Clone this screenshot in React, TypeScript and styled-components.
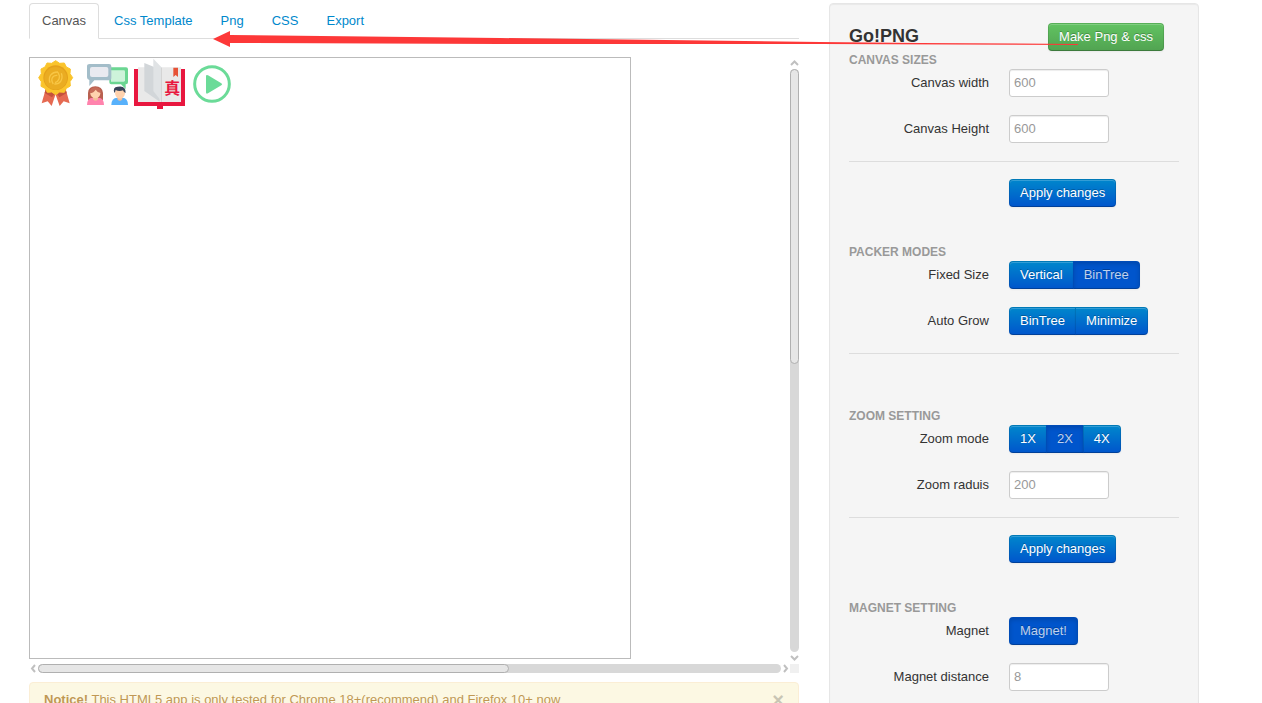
import React from "react";
import styled, { createGlobalStyle, css } from "styled-components";

const GlobalStyle = createGlobalStyle`
  * { box-sizing: border-box; }
  body {
    margin: 0;
    background: #fff;
    color: #333;
    font-family: "Liberation Sans", Arial, "Noto Sans CJK SC", sans-serif;
    font-size: 13px;
    line-height: 18px;
  }
`;

const Page = styled.div`
  position: relative;
  display: grid;
  grid-template-columns: minmax(0, 77fr) minmax(0, 37fr);
  gap: 30px;
  align-items: start;
  height: 100vh;
  padding: 3px 63px 0 29px;
  overflow: hidden;
`;

const Main = styled.main`
  display: flex;
  flex-direction: column;
`;

const Tabs = styled.nav`
  display: flex;
  gap: 2px;
  height: 36px;
  margin-bottom: 18px;
  border-bottom: 1px solid #ddd;
`;

const Tab = styled.a<{ $active?: boolean }>`
  height: 36px;
  padding: 8px 12px;
  border: 1px solid transparent;
  border-radius: 4px 4px 0 0;
  color: #08c;
  text-decoration: none;
  ${(p) =>
    p.$active &&
    css`
      background: #fff;
      border-color: #ddd #ddd #fff;
      color: #555;
    `}
`;

const Scroller = styled.section`
  display: grid;
  grid-template-columns: minmax(0, 1fr) 9px;
  grid-template-rows: auto 9px;
  margin-bottom: 9px;
`;

const Viewport = styled.div`
  padding-bottom: 5px;
  overflow: hidden;
`;

const Stage = styled.div`
  position: relative;
  width: 602px;
  height: 602px;
  border: 1px solid #bbb;
`;

const Sprite = styled.svg<{ $x: number; $y: number }>`
  position: absolute;
  left: ${(p) => p.$x}px;
  top: ${(p) => p.$y}px;
`;

const Bar = styled.div<{ $vertical?: boolean }>`
  display: flex;
  flex-direction: ${(p) => (p.$vertical ? "column" : "row")};
`;

const BarArrow = styled.svg<{ $vertical?: boolean }>`
  flex: none;
  width: 9px;
  height: ${(p) => (p.$vertical ? 12 : 9)}px;
  fill: none;
  stroke: #c0c0c0;
  stroke-width: 2;
`;

const Track = styled.div`
  display: flex;
  flex-direction: inherit;
  flex: 1;
  border-radius: 5px;
  background: #d8d8d8;
`;

const Thumb = styled.div<{ $share: number }>`
  flex: 0 0 ${(p) => p.$share * 100}%;
  border: 1px solid #b0b0b0;
  border-radius: 5px;
  background: #e6e6e6;
`;

const Corner = styled.div`
  background: #f0f0f0;
`;

const Alert = styled.div`
  display: flex;
  justify-content: space-between;
  padding: 8px 14px;
  border: 1px solid #fbeed5;
  border-radius: 4px;
  background: #fcf8e3;
  color: #c09853;
  text-shadow: 0 1px 0 rgba(255, 255, 255, 0.5);
`;

const CloseButton = styled.button`
  height: 18px;
  padding: 0;
  border: 0;
  background: none;
  color: #000;
  opacity: 0.2;
  font: bold 20px/16px "Liberation Sans", Arial, sans-serif;
`;

const Panel = styled.aside`
  padding: 19px;
  border: 1px solid #e6e6e6;
  border-radius: 4px;
  background: #f5f5f5;
  box-shadow: inset 0 1px 1px rgba(0, 0, 0, 0.05);
`;

const PanelHeader = styled.header`
  display: flex;
  justify-content: space-between;
  padding-right: 15px;
`;

const Title = styled.h1`
  margin: 0;
  font-size: 18px;
  line-height: 27px;
`;

const Group = styled.section`
  display: flex;
  flex-direction: column;
  gap: 18px;
  margin-bottom: 36px;
`;

const GroupTitle = styled.h2`
  margin: 0 0 -18px;
  color: #999;
  font-size: 12px;
  line-height: 18px;
  text-transform: uppercase;
`;

const Row = styled.div`
  display: grid;
  grid-template-columns: 140px minmax(0, 1fr);
  column-gap: 20px;
`;

const Label = styled.label`
  padding-top: 5px;
  text-align: right;
`;

const Field = styled.input`
  width: 100px;
  height: 28px;
  padding: 3px 4px 5px;
  border: 1px solid #ccc;
  border-radius: 3px;
  background: #fff;
  box-shadow: inset 0 1px 1px rgba(0, 0, 0, 0.075);
  color: #555;
  font: inherit;
  &::placeholder { color: #999; }
`;

const Rule = styled.hr`
  width: 100%;
  height: 1px;
  margin: 0 0 -1px;
  border: 0;
  background: #ddd;
`;

const Button = styled.button<{ $tone?: "success"; $active?: boolean }>`
  height: 28px;
  padding: 4px 10px;
  border: 1px solid;
  border-color: rgba(0, 0, 0, 0.1) rgba(0, 0, 0, 0.1) rgba(0, 0, 0, 0.25);
  border-radius: 4px;
  background: ${(p) =>
      p.$tone === "success"
        ? "linear-gradient(#62c462, #51a351)"
        : "linear-gradient(#08c, #05c)"}
    border-box;
  box-shadow: inset 0 1px 0 rgba(255, 255, 255, 0.2), 0 1px 2px rgba(0, 0, 0, 0.05);
  color: #fff;
  font: inherit;
  text-shadow: 0 -1px 0 rgba(0, 0, 0, 0.25);
  white-space: nowrap;
  ${(p) =>
    p.$active &&
    css`
      background: #05c border-box;
      box-shadow: inset 0 2px 4px rgba(0, 0, 0, 0.15), 0 1px 2px rgba(0, 0, 0, 0.05);
      color: rgba(255, 255, 255, 0.75);
    `}
`;

const ButtonGroup = styled.div`
  display: flex;
  & > button { border-radius: 0; }
  & > button + button { margin-left: -1px; }
  & > button:first-child { border-radius: 4px 0 0 4px; }
  & > button:last-child { border-radius: 0 4px 4px 0; }
  & > button:only-child { border-radius: 4px; }
`;

const Pointer = styled.svg`
  position: absolute;
  left: 213px;
  top: 30px;
  pointer-events: none;
`;

const medalRim = Array.from({ length: 24 }, (_, i) => {
  const angle = (i * Math.PI) / 12;
  const radius = i % 2 ? 45 : 51;
  return `${Math.round(53 + radius * Math.sin(angle))},${Math.round(53 - radius * Math.cos(angle))}`;
}).join(" ");

function Medal() {
  return (
    <Sprite $x={8} $y={2} width="36" height="48" viewBox="0 0 108 144" aria-label="Medal">
      <path d="M24 84 11 130 29 124 41 138 55 96z" fill="#e56a52" />
      <path d="M82 84 95 130 77 124 65 138 50 96z" fill="#e56a52" />
      <path d="M24 84 20 99 42 112 54 96 64 112 86 99 82 84z" fill="#c4523c" />
      <polygon points={medalRim} fill="#fac42c" stroke="#fac42c" strokeWidth="3" strokeLinejoin="round" />
      <circle cx="53" cy="53" r="37" fill="#e5a11b" />
      <circle cx="53" cy="55" r="34" fill="#eaac22" />
      <path
        d="M36 68C29 50 42 35 60 36M46 72C36 58 44 45 58 46M70 40c7 18-4 33-21 32M60 37c9 14 3 27-9 31"
        fill="none"
        stroke="#f8c645"
        strokeWidth="4"
      />
    </Sprite>
  );
}

function Chat() {
  return (
    <Sprite $x={57} $y={6} width="42" height="42" viewBox="0 0 126 126" aria-label="Chat">
      <path d="M67 10h50q6 0 6 6v39q0 6-6 6h-1v14L102 61H73q-6 0-6-6z" fill="#6bd692" />
      <path d="M72 19h38q4 0 4 4v26q0 4-4 4H72z" fill="#cdf3da" />
      <path d="M8 0h58q7 0 7 7v34q0 8-7 8H22L7 66V48q-7-1-7-8V7q0-7 8-7z" fill="#a3bdc9" />
      <rect x="9" y="9" width="55" height="30" rx="6" fill="#e9eaf0" />
      <path d="M3 109V87q1-20 22-20t23 20v22z" fill="#b86050" />
      <path d="M0 123q0-21 17-22h17q17 1 17 22z" fill="#ff83ad" />
      <path d="M18 94h15v12q-7 9-15 0z" fill="#f3bd98" />
      <ellipse cx="25" cy="88" rx="15" ry="15" fill="#ffd2ae" />
      <path d="M8 88q13-2 18-11 5 9 17 11-1-18-18-18T8 88z" fill="#c66c59" />
      <path d="M73 123q0-21 18-22h15q17 1 17 22z" fill="#58b1fb" />
      <path d="M91 94h15v12q-7 9-15 0z" fill="#f3bd98" />
      <ellipse cx="99" cy="88" rx="15" ry="16" fill="#ffd2ae" />
      <path d="M82 87q-6-18 10-19 25-5 24 19-6-2-8-8-12 4-22-1 0 5-4 9z" fill="#384358" />
    </Sprite>
  );
}

function Book() {
  return (
    <Sprite $x={104} $y={0} width="52" height="52" viewBox="0 0 156 156" aria-label="Dictionary">
      <path d="M0 33h153v111h-66v9H69v-9H0z" fill="#e8173f" />
      <path d="M12 28h129v104H12z" fill="#e9e9e9" />
      <path d="M31 15 77 34v97L31 99z" fill="#d2d6d9" />
      <path d="M58 2 84 29v103L58 99z" fill="#e0e3e5" />
      <path d="M81 29h3v103h-3z" fill="#d4d4d4" />
      <path d="M118 29h14v28l-7-6-7 6z" fill="#e65236" />
      <text
        x="91"
        y="108"
        fill="#e8173f"
        fontFamily="'Noto Sans CJK SC', sans-serif"
        fontSize="48"
        fontWeight="700"
      >
        真
      </text>
    </Sprite>
  );
}

function Play() {
  return (
    <Sprite $x={163} $y={7} width="38" height="38" viewBox="0 0 114 114" aria-label="Play">
      <circle cx="57" cy="57" r="52" fill="none" stroke="#6bdb98" strokeWidth="9" />
      <path d="M39 34q0-6 6-3l40 24q5 3 0 6L45 85q-6 3-6-3z" fill="#6bdb98" />
    </Sprite>
  );
}

function NumberRow({ id, label, hint }: { id: string; label: string; hint: string }) {
  return (
    <Row>
      <Label htmlFor={id}>{label}</Label>
      <Field id={id} type="text" placeholder={hint} />
    </Row>
  );
}

function ChoiceRow({ id, label, options, active }: { id: string; label: string; options: string[]; active?: string }) {
  return (
    <Row>
      <Label as="span" id={id}>{label}</Label>
      <ButtonGroup role="group" aria-labelledby={id}>
        {options.map((o) => (
          <Button key={o} type="button" $active={o === active} aria-pressed={o === active}>
            {o}
          </Button>
        ))}
      </ButtonGroup>
    </Row>
  );
}

function ApplyRow() {
  return (
    <Row>
      <span />
      <div>
        <Button type="button">Apply changes</Button>
      </div>
    </Row>
  );
}

export default function App() {
  return (
    <>
      <GlobalStyle />
      <Page>
        <Main>
          <Tabs>
            <Tab href="#canvas" $active>Canvas</Tab>
            <Tab href="#template">Css Template</Tab>
            <Tab href="#png">Png</Tab>
            <Tab href="#css">CSS</Tab>
            <Tab href="#export">Export</Tab>
          </Tabs>
          <Scroller>
            <Viewport>
              <Stage>
                <Medal />
                <Chat />
                <Book />
                <Play />
              </Stage>
            </Viewport>
            <Bar $vertical>
              <BarArrow $vertical viewBox="0 0 9 12"><path d="M1 8 4.5 4.5 8 8" /></BarArrow>
              <Track><Thumb $share={295 / 583} /></Track>
              <BarArrow $vertical viewBox="0 0 9 12"><path d="M1 4 4.5 7.500 8 4" /></BarArrow>
            </Bar>
            <Bar>
              <BarArrow viewBox="0 0 9 9"><path d="M6 1 3 4.5 6 8" /></BarArrow>
              <Track><Thumb $share={471 / 743} /></Track>
              <BarArrow viewBox="0 0 9 9"><path d="M3 1 6 4.5 3 8" /></BarArrow>
            </Bar>
            <Corner />
          </Scroller>
          <Alert role="alert">
            <span>
              <strong>Notice!</strong> This HTML5 app is only tested for Chrome 18+(recommend) and Firefox 10+ now
            </span>
            <CloseButton type="button" aria-label="Close">×</CloseButton>
          </Alert>
        </Main>

        <Panel>
          <PanelHeader>
            <Title>Go!PNG</Title>
            <Button type="button" $tone="success">Make Png &amp; css</Button>
          </PanelHeader>
          <Group>
            <GroupTitle>Canvas sizes</GroupTitle>
            <NumberRow id="canvas-width" label="Canvas width" hint="600" />
            <NumberRow id="canvas-height" label="Canvas Height" hint="600" />
            <Rule />
            <ApplyRow />
          </Group>
          <Group>
            <GroupTitle>Packer modes</GroupTitle>
            <ChoiceRow id="fixed-size" label="Fixed Size" options={["Vertical", "BinTree"]} active="BinTree" />
            <ChoiceRow id="auto-grow" label="Auto Grow" options={["BinTree", "Minimize"]} />
            <Rule />
            <div />
          </Group>
          <Group>
            <GroupTitle>Zoom setting</GroupTitle>
            <ChoiceRow id="zoom-mode" label="Zoom mode" options={["1X", "2X", "4X"]} active="2X" />
            <NumberRow id="zoom-radius" label="Zoom raduis" hint="200" />
            <Rule />
            <ApplyRow />
          </Group>
          <Group>
            <GroupTitle>Magnet setting</GroupTitle>
            <ChoiceRow id="magnet" label="Magnet" options={["Magnet!"]} active="Magnet!" />
            <NumberRow id="magnet-distance" label="Magnet distance" hint="8" />
          </Group>
        </Panel>

        <Pointer width="866" height="18" viewBox="0 0 866 18" aria-hidden="true">
          <path d="M0 9 17 1 17 5 287 8 607 12 707 13 865 14 865 15 607 14 287 14 17 13 17 17z" fill="#fd3838" />
        </Pointer>
      </Page>
    </>
  );
}
